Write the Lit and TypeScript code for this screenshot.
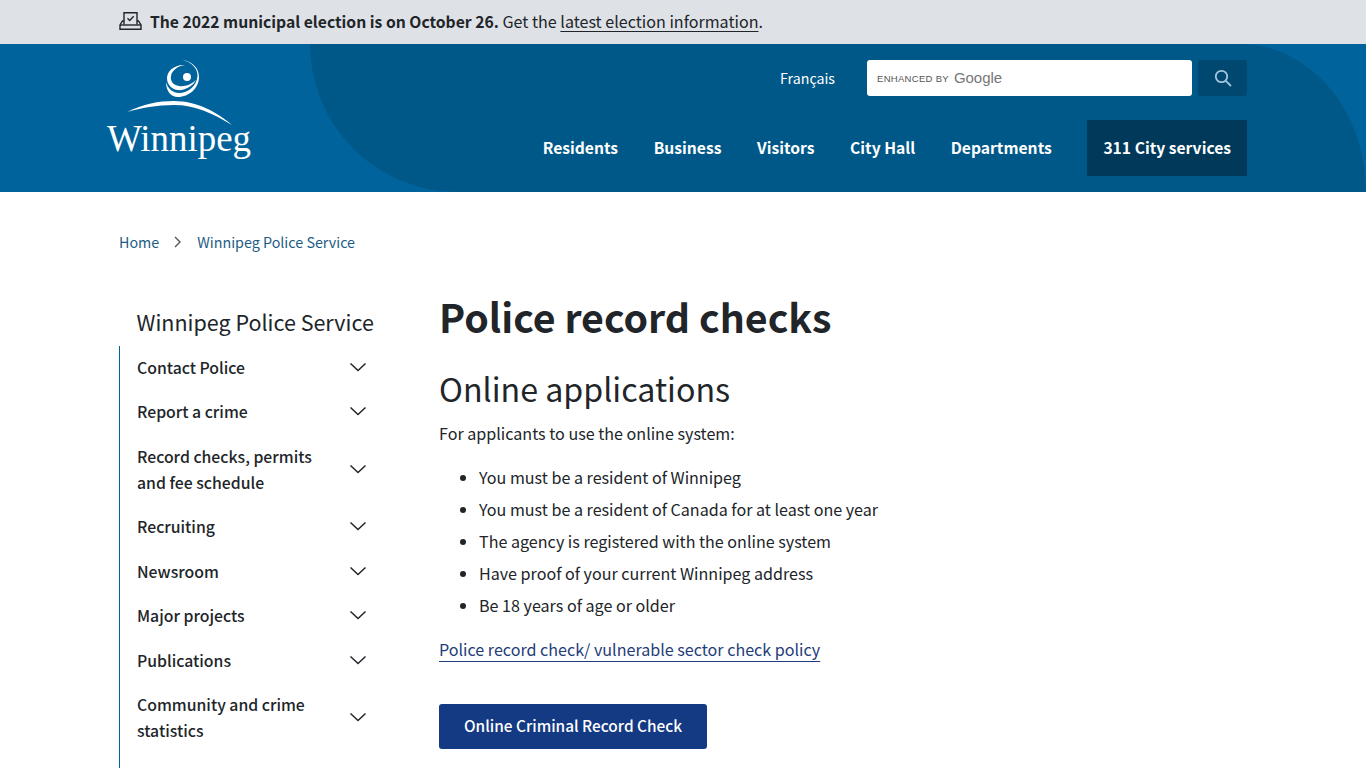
import { LitElement, html, css } from "lit";
import { customElement } from "lit/decorators.js";

const chevron = html`<svg class="chev" width="18" height="10" viewBox="0 0 18 10"><path d="M1.5 1.5 L9 8.5 L16.5 1.5" fill="none" stroke="#212529" stroke-width="1.5"/></svg>`;

const navItems: { t: string[]; h: number }[] = [
  { t: ["Contact Police"], h: 43.8 },
  { t: ["Report a crime"], h: 45 },
  { t: ["Record checks, permits", "and fee schedule"], h: 70 },
  { t: ["Recruiting"], h: 45 },
  { t: ["Newsroom"], h: 44 },
  { t: ["Major projects"], h: 45 },
  { t: ["Publications"], h: 44 },
  { t: ["Community and crime", "statistics"], h: 70 },
];

@customElement("app-root")
export class AppRoot extends LitElement {
  static styles = css`
    :host { display: block; height: 768px; overflow: hidden; background: #fff; color: #212529;
      font-family: "Noto Sans CJK SC", "Noto Sans", sans-serif; font-size: 16.1px; }
    a { color: inherit; }
    .alert { height: 44px; background: #dee2e6; display: flex; align-items: center; padding-left: 119px; gap: 8px; font-size: 16.1px; }
    .alert svg { display: block; margin-bottom: 2px; }
    .alert div { line-height: 42px; margin-bottom: 2px; }
    .alert b { font-weight: 700; font-size: 15.7px; }
    .alert a { text-underline-offset: 3px; }
    .head { position: relative; height: 148px; background: #00639c; overflow: hidden; }
    .blob { position: absolute; left: 310px; top: 0; width: 1056px; height: 148px; background: #005888;
      border-radius: 0 126px 0 148px / 0 148px 0 148px; }
    .headin { position: relative; display: flex; justify-content: space-between; height: 148px; padding: 0 119px 0 107px; }
    .logo { margin-top: 16px; display: block; overflow: visible; }
    .logobox { width: 150px; }
    .right { display: flex; flex-direction: column; align-items: flex-end; padding-top: 16px; }
    .top { display: flex; align-items: center; height: 36px; }
    .fr { color: #fff; font-size: 14.2px; line-height: 36px; margin-right: 32px; }
    .search { width: 325px; height: 36px; box-sizing: border-box; background: #fff; border-radius: 3px; display: flex; align-items: center; padding-left: 10px; gap: 5px; }
    .enh { font-family: "Liberation Sans", sans-serif; font-size: 9.5px; letter-spacing: .3px; color: #555; }
    .goog { font-family: "Liberation Sans", sans-serif; font-size: 15px; color: #777; margin-top: -2px; letter-spacing: -.05px; }
    .sbtn { width: 49px; height: 36px; margin-left: 6px; background: #00486f; border-radius: 3px; display: flex; align-items: center; justify-content: center; }
    .menu { display: flex; margin-top: 24px; align-items: center; height: 56px; }
    .menu span { color: #fff; font-weight: 700; font-size: 15.65px; margin-right: 35.6px; line-height: 56px; }
    .menu .cta { margin: 0; background: #00395a; padding: 0 16px; height: 56px; display: block; }
    .crumb { display: flex; align-items: center; padding: 38px 0 0 119px; height: 24px; font-size: 14.3px; line-height: 24px; color: #1d5c85; }
    .crumb svg { margin: 0 15px; display: block; }
    .main { display: flex; padding-left: 119px; margin-top: 39px; }
    .side { width: 320px; flex: none; padding-top: 14px; }
    .side h2 { margin: 0 0 0 17.5px; font-weight: 400; font-size: 21.5px; line-height: 30px; height: 39px; color: #212529; }
    .navl { border-left: 1px solid #00639c; width: 249px; height: 460px; }
    .row { display: flex; align-items: center; justify-content: space-between; padding-left: 17px; box-sizing: border-box; width: 249px; }
    .row span { display: block; font-weight: 500; font-size: 15.8px; line-height: 26px; }
    .chev { display: block; margin-right: 2.5px; margin-top: -2px; }
    .content { flex: 1; }
    h1 { margin: 0; font-size: 39.3px; line-height: 46px; font-weight: 700; color: #212529; }
    h3 { margin: 29px 0 0; font-size: 32.2px; line-height: 40px; font-weight: 400; }
    p { margin: 9px 0 0; line-height: 32px; }
    ul { margin: 12px 0 0; padding: 0 0 0 40px; line-height: 32px; }
    .lnk { display: inline-block; margin-top: 12px; line-height: 32px; color: #1f3d7a; text-underline-offset: 5px; }
    .btn { display: inline-block; margin-top: 39px; background: #143a84; color: #fff; border-radius: 3px; padding: 0 25px; height: 45px; line-height: 43px; font-size: 15.4px; font-weight: 500; }
    .block { display: block; }
  `;

  render() {
    return html`
      <div class="alert">
        <svg width="23" height="18" viewBox="0 0 23 18" fill="none" stroke="#212529" stroke-width="1.4">
          <path d="M5 12.5V0.7h13v11.8"/>
          <path d="M8.5 6.2l2.2 2.2 4-4.2"/>
          <path d="M5 9H3.5L1 13v4.3h21V13l-2.5-4H18"/>
          <path d="M1 13h21"/>
        </svg>
        <div><b>The 2022 municipal election is on October 26.</b> Get the <a href="#">latest election information</a>.</div>
      </div>
      <div class="head">
        <div class="blob"></div>
        <div class="headin">
          <div class="logobox">
            <svg class="logo" width="146" height="104" viewBox="0 0 146 104" fill="#fff">
              <path d="M75 0 C86 1 92 9 92 17 C92 28 82 37 71 37 C64 37 59 31 59 22 C61 29 66 33 72 33 C81 33 90 26 90.5 16 C91 9 85 2 75 0Z"/>
              <path d="M78 5 C68 4 60 11 60 18 C60 25 65 29 70 30 C78 31 86 26 89 20 C85 24 78 27 72 26 C66 25 63 21 64 16 C65 10 71 6 78 5Z"/>
              <circle cx="80" cy="17" r="4"/>
              <path d="M20 52 C36 44 52 41 67 41 C90 41 110 52 125 65 C105 53 88 45 67 45 C50 45 34 48 20 52Z"/>
              <text x="0" y="91" font-family="Liberation Serif, serif" font-size="38" textLength="144" lengthAdjust="spacingAndGlyphs">Winnipeg</text>
            </svg>
          </div>
          <div class="right">
            <div class="top">
              <span class="fr">Français</span>
              <div class="search"><span class="enh">ENHANCED BY</span><span class="goog">Google</span></div>
              <div class="sbtn">
                <svg width="18" height="18" viewBox="0 0 18 18" fill="none" stroke="#a3c6de" stroke-width="1.8"><circle cx="7.5" cy="7.5" r="5.7"/><path d="M11.8 11.8L17 17"/></svg>
              </div>
            </div>
            <div class="menu">
              <span>Residents</span><span>Business</span><span>Visitors</span><span>City Hall</span><span>Departments</span><span class="cta">311 City services</span>
            </div>
          </div>
        </div>
      </div>
      <div class="crumb">
        <span>Home</span>
        <svg width="8" height="12" viewBox="0 0 8 12" fill="none" stroke="#555" stroke-width="1.4"><path d="M1 1l5 5-5 5"/></svg>
        <span>Winnipeg Police Service</span>
      </div>
      <div class="main">
        <div class="side">
          <h2>Winnipeg Police Service</h2>
          <div class="navl">
            ${navItems.map((n) => html`<div class="row" style="height:${n.h}px"><span>${n.t.map((l) => html`<span>${l}</span>`)}</span>${chevron}</div>`)}
          </div>
        </div>
        <div class="content">
          <h1>Police record checks</h1>
          <h3>Online applications</h3>
          <p>For applicants to use the online system:</p>
          <ul>
            <li>You must be a resident of Winnipeg</li>
            <li>You must be a resident of Canada for at least one year</li>
            <li>The agency is registered with the online system</li>
            <li>Have proof of your current Winnipeg address</li>
            <li>Be 18 years of age or older</li>
          </ul>
          <a class="lnk" href="#">Police record check/ vulnerable sector check policy</a>
          <div class="block"><span class="btn">Online Criminal Record Check</span></div>
        </div>
      </div>
    `;
  }
}
